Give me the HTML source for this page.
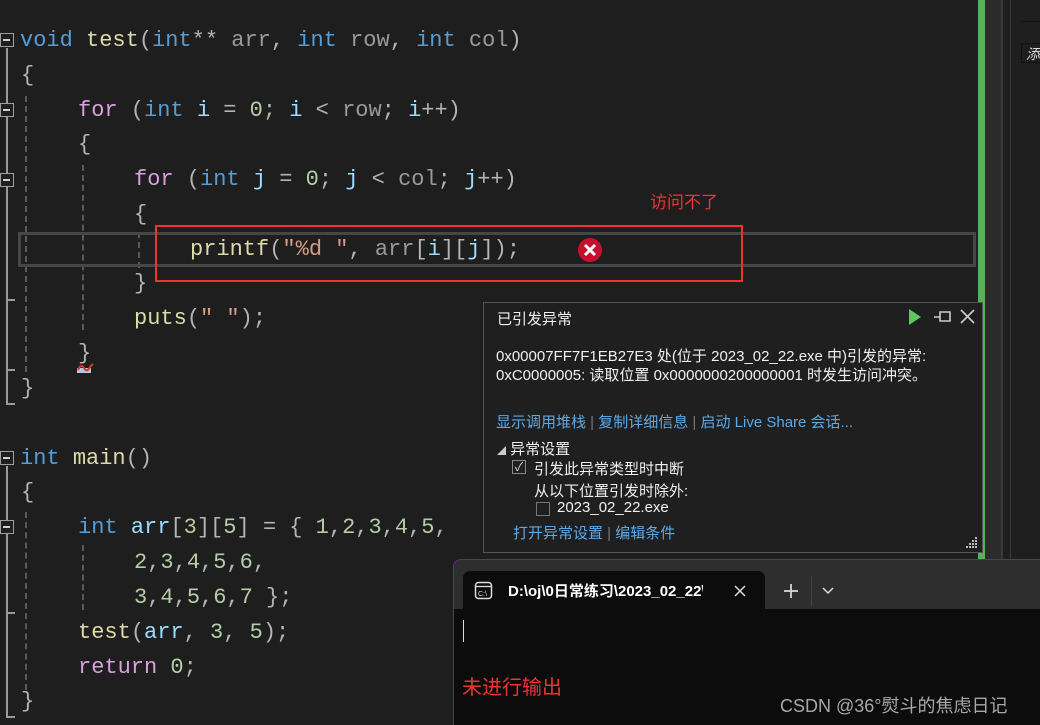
<!DOCTYPE html>
<html><head><meta charset="utf-8"><style>
*{margin:0;padding:0;box-sizing:border-box}
html,body{width:1040px;height:725px;overflow:hidden}
body{background:#1e1e1e;position:relative;font-family:"Liberation Sans","Noto Sans CJK SC",sans-serif}
.ln{position:absolute;height:35px;line-height:35px;font-family:"Liberation Mono","Noto Sans CJK SC",monospace;font-size:22px;color:#b4b4b4;white-space:pre}
.k{color:#569cd6}.f{color:#d8a0df}.fn{color:#dcdcaa}.v{color:#9cdcfe}.p{color:#9a9a9a}.n{color:#b5cea8}.s{color:#d69d85}
.abs{position:absolute}
.box{position:absolute;left:0;width:14px;height:14px;border:1.5px solid #a0a0a0;background:#1e1e1e}
.box:after{content:"";position:absolute;left:2px;top:5px;width:7px;height:1.5px;background:#d0d0d0}
.vl{position:absolute;left:6px;width:2px;background:#9a9a9a}
.tk{position:absolute;left:6px;width:9px;height:2px;background:#9a9a9a}
.dg{position:absolute;width:0;border-left:2px dashed #5a5a5a}
.pt{position:absolute;color:#f0f0f0;font-size:15px;white-space:nowrap}
.lk{color:#5ea8e6}
</style></head><body>
<div class="abs" style="left:978px;top:0;width:7px;height:560px;background:#57b15a"></div>
<div class="abs" style="left:985px;top:0;width:16px;height:560px;background:#2b2b2b"></div>
<div class="abs" style="left:1001px;top:0;width:2px;height:560px;background:#3a3a3a"></div>
<div class="abs" style="left:1010px;top:0;width:1px;height:560px;background:#3a3a3a"></div>
<div class="abs" style="left:1022px;top:21px;width:18px;height:1px;background:#111"></div>
<div class="abs" style="left:1021px;top:43px;width:19px;height:20px;border-left:1px solid #111;border-top:1px solid #111;border-bottom:1px solid #111;color:#ddd;font-size:14px;line-height:20px;padding-left:4px;overflow:hidden;font-style:italic">添</div>

<div class="vl" style="top:48px;height:357px"></div>
<div class="tk" style="top:299px"></div><div class="tk" style="top:369px"></div><div class="tk" style="top:403px"></div>
<div class="vl" style="top:466px;height:252px"></div>
<div class="tk" style="top:612px"></div><div class="tk" style="top:716px"></div>
<div class="box" style="top:33px"></div>
<div class="box" style="top:103px"></div>
<div class="box" style="top:173px"></div>
<div class="box" style="top:451px"></div>
<div class="box" style="top:520px"></div>
<div class="dg" style="left:25px;top:96px;height:276px"></div>
<div class="dg" style="left:82px;top:165px;height:165px"></div>
<div class="dg" style="left:138px;top:232px;height:36px"></div>
<div class="dg" style="left:25px;top:512px;height:178px"></div>
<div class="dg" style="left:82px;top:545px;height:65px"></div>

<div class="abs" style="left:18px;top:232px;width:958px;height:35px;border:3px solid #464646"></div>
<div class="abs" style="left:155px;top:225px;width:588px;height:57px;border:2.5px solid #ee3333"></div>
<div class="abs" style="left:650px;top:188px;color:#ee3333;font-size:17px">访问不了</div>
<svg class="abs" style="left:577px;top:237px" width="26" height="26"><circle cx="13" cy="13" r="12" fill="#c8102e"/><path d="M8 8L18 18M18 8L8 18" stroke="#fff" stroke-width="3"/></svg>
<div class="abs" style="left:77px;top:368px;width:14px;height:5px;background:#a8d0e0"></div>
<svg class="abs" style="left:77px;top:362px" width="18" height="10"><path d="M1 8Q4 1 7 6T13 5L16 2" stroke="#e03030" stroke-width="2" fill="none"/></svg>

<div class="ln" style="left:20px;top:23px"><span class="k">void</span> <span class="fn">test</span>(<span class="k">int</span>** <span class="p">arr</span>, <span class="k">int</span> <span class="p">row</span>, <span class="k">int</span> <span class="p">col</span>)</div>
<div class="ln" style="left:21px;top:58px">{</div>
<div class="ln" style="left:78px;top:93px"><span class="f">for</span> (<span class="k">int</span> <span class="v">i</span> = <span class="n">0</span>; <span class="v">i</span> &lt; <span class="p">row</span>; <span class="v">i</span>++)</div>
<div class="ln" style="left:78px;top:127px">{</div>
<div class="ln" style="left:134px;top:162px"><span class="f">for</span> (<span class="k">int</span> <span class="v">j</span> = <span class="n">0</span>; <span class="v">j</span> &lt; <span class="p">col</span>; <span class="v">j</span>++)</div>
<div class="ln" style="left:134px;top:197px">{</div>
<div class="ln" style="left:190px;top:232px"><span class="fn">printf</span>(<span class="s">"%d "</span>, <span class="p">arr</span>[<span class="v">i</span>][<span class="v">j</span>]);</div>
<div class="ln" style="left:134px;top:266px">}</div>
<div class="ln" style="left:134px;top:301px"><span class="fn">puts</span>(<span class="s">" "</span>);</div>
<div class="ln" style="left:78px;top:336px">}</div>
<div class="ln" style="left:21px;top:371px">}</div>
<div class="ln" style="left:20px;top:441px"><span class="k">int</span> <span class="fn">main</span>()</div>
<div class="ln" style="left:21px;top:475px">{</div>
<div class="ln" style="left:78px;top:510px"><span class="k">int</span> <span class="v">arr</span>[<span class="n">3</span>][<span class="n">5</span>] = { <span class="n">1</span>,<span class="n">2</span>,<span class="n">3</span>,<span class="n">4</span>,<span class="n">5</span>,</div>
<div class="ln" style="left:134px;top:545px"><span class="n">2</span>,<span class="n">3</span>,<span class="n">4</span>,<span class="n">5</span>,<span class="n">6</span>,</div>
<div class="ln" style="left:134px;top:580px"><span class="n">3</span>,<span class="n">4</span>,<span class="n">5</span>,<span class="n">6</span>,<span class="n">7</span> };</div>
<div class="ln" style="left:78px;top:615px"><span class="fn">test</span>(<span class="v">arr</span>, <span class="n">3</span>, <span class="n">5</span>);</div>
<div class="ln" style="left:78px;top:650px"><span class="f">return</span> <span class="n">0</span>;</div>
<div class="ln" style="left:21px;top:684px">}</div>

<div class="abs" style="left:483px;top:302px;width:500px;height:251px;background:#1f1f1f;border:1px solid #555"></div>
<div class="pt" style="left:497px;top:308px">已引发异常</div>
<svg class="abs" style="left:906px;top:307px" width="72" height="20"><path d="M3 2L15 10L3 18Z" fill="#5bc85f"/><path d="M28 10H34M34 5H44V14H34Z" stroke="#ccc" stroke-width="1.6" fill="none"/><path d="M55 3L68 16M68 3L55 16" stroke="#ccc" stroke-width="1.6"/></svg>
<div class="pt" style="left:496px;top:345px">0x00007FF7F1EB27E3 处(位于 2023_02_22.exe 中)引发的异常:</div>
<div class="pt" style="left:496px;top:364px">0xC0000005: 读取位置 0x0000000200000001 时发生访问冲突。</div>
<div class="pt lk" style="left:496px;top:411px">显示调用堆栈 <span style="color:#777">|</span> 复制详细信息 <span style="color:#777">|</span> 启动 Live Share 会话...</div>
<div class="pt" style="left:497px;top:438px"><span style="font-size:9px;color:#ccc">◢</span> 异常设置</div>
<div class="abs" style="left:512px;top:460px;width:14px;height:14px;border:1px solid #888;color:#ddd;font-size:12px;line-height:12px;text-align:center">✓</div>
<div class="pt" style="left:534px;top:458px">引发此异常类型时中断</div>
<div class="pt" style="left:534px;top:480px">从以下位置引发时除外:</div>
<div class="abs" style="left:536px;top:502px;width:14px;height:14px;border:1px solid #777"></div>
<div class="pt" style="left:557px;top:499px">2023_02_22.exe</div>
<div class="pt lk" style="left:513px;top:522px">打开异常设置 <span style="color:#777">|</span> 编辑条件</div>
<svg class="abs" style="left:965px;top:536px" width="14" height="14"><g fill="#bbb"><rect x="10" y="1" width="2" height="2"/><rect x="7" y="4" width="2" height="2"/><rect x="10" y="4" width="2" height="2"/><rect x="4" y="7" width="2" height="2"/><rect x="7" y="7" width="2" height="2"/><rect x="10" y="7" width="2" height="2"/><rect x="1" y="10" width="2" height="2"/><rect x="4" y="10" width="2" height="2"/><rect x="7" y="10" width="2" height="2"/><rect x="10" y="10" width="2" height="2"/></g></svg>

<div class="abs" style="left:453px;top:559px;width:600px;height:166px;background:#2e2e2e;border-top:1px solid #6a2a8a;border-left:1px solid #6a2a8a;border-radius:8px 0 0 0"></div>
<div class="abs" style="left:454px;top:609px;width:590px;height:116px;background:#0c0c0c"></div>
<div class="abs" style="left:463px;top:571px;width:302px;height:40px;background:#0c0c0c;border-radius:7px 7px 0 0"></div>
<svg class="abs" style="left:474px;top:581px" width="20" height="20"><rect x="1.5" y="1.5" width="16" height="16" rx="3" stroke="#ddd" stroke-width="1.5" fill="none"/><path d="M2 5.5H17" stroke="#ddd" stroke-width="1.3"/><text x="4" y="15" font-size="7" fill="#ddd" font-family="Liberation Sans">C:\</text></svg>
<div class="abs" style="left:508px;top:580px;width:195px;overflow:hidden;white-space:nowrap;color:#fff;font-size:15px;font-weight:bold">D:\oj\0日常练习\2023_02_22\x64</div>
<svg class="abs" style="left:733px;top:584px" width="14" height="14"><path d="M2 2L12 12M12 2L2 12" stroke="#ddd" stroke-width="1.5"/></svg>
<svg class="abs" style="left:782px;top:582px" width="18" height="18"><path d="M9 2V16M2 9H16" stroke="#ddd" stroke-width="1.7"/></svg>
<div class="abs" style="left:811px;top:576px;width:1px;height:30px;background:#444"></div>
<svg class="abs" style="left:821px;top:585px" width="14" height="10"><path d="M2 3L7 8L12 3" stroke="#ddd" stroke-width="1.5" fill="none"/></svg>
<div class="abs" style="left:463px;top:620px;width:1px;height:22px;background:#ddd"></div>
<div class="abs" style="left:462px;top:671px;color:#ee3333;font-size:20px">未进行输出</div>
<div class="abs" style="left:780px;top:692px;color:#a8a8a8;font-size:18px;white-space:nowrap">CSDN @36°熨斗的焦虑日记</div>
</body></html>
